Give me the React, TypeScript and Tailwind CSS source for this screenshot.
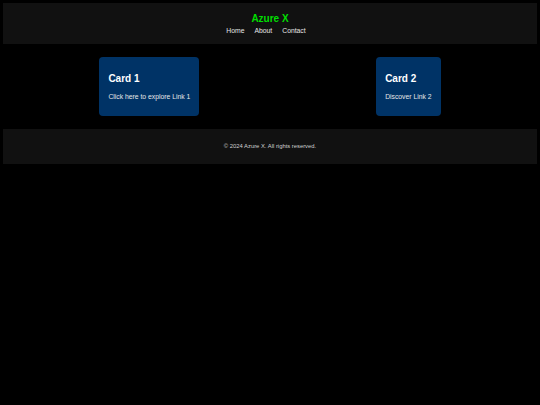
export default function App() {
  const font = { fontFamily: '"Liberation Sans", Arial, sans-serif' };
  return (
    <div className="min-h-screen bg-black p-[3px]" style={font}>
      <header className="flex h-[41px] flex-col items-center bg-[#111111] pt-[10px]">
        <h1 className="text-[10px] font-bold leading-[12px] text-[#00dd00]">Azure X</h1>
        <nav className="mt-[2px] flex gap-[10px] pr-[8px] text-[6.8px] leading-[8px] text-[#e6e6e6]">
          <a>Home</a>
          <a>About</a>
          <a>Contact</a>
        </nav>
      </header>
      <main className="flex justify-around px-[8px] py-[13px]">
        <div className="rounded-[4px] bg-[#003366] px-[9px] pt-[16px] pb-[15px]">
          <h2 className="mb-[8px] text-[10px] font-bold leading-[12px] text-white">Card 1</h2>
          <p className="text-[6.8px] leading-[8px] text-[#e6e6e6]">Click here to explore Link 1</p>
        </div>
        <div className="rounded-[4px] bg-[#003366] px-[9px] pt-[16px] pb-[15px]">
          <h2 className="mb-[8px] text-[10px] font-bold leading-[12px] text-white">Card 2</h2>
          <p className="text-[6.8px] leading-[8px] text-[#e6e6e6]">Discover Link 2</p>
        </div>
      </main>
      <footer className="flex h-[35px] items-center justify-center bg-[#111111]">
        <p className="text-[5.85px] leading-[7px] text-[#d0d0d0]">© 2024 Azure X. All rights reserved.</p>
      </footer>
    </div>
  );
}
